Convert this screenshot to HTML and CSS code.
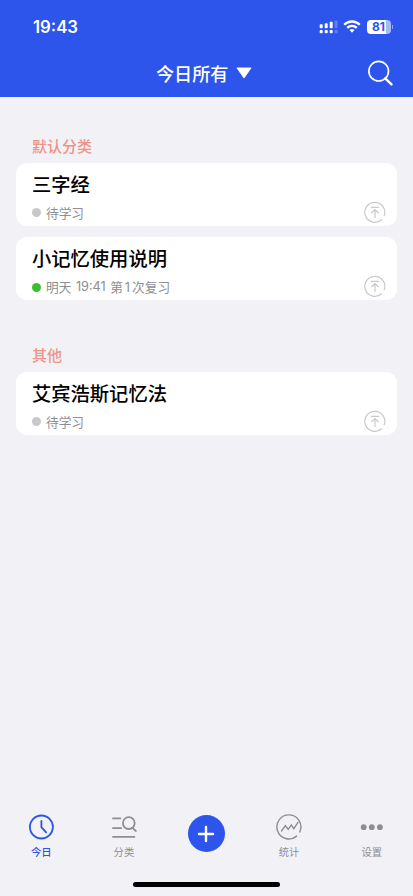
FILE: index.html
```html
<!DOCTYPE html>
<html lang="zh-CN">
<head>
  <meta charset="UTF-8">
  <meta name="viewport" content="width=device-width, initial-scale=1.0">
  <title>今日</title>
  <link rel="stylesheet" href="styles.css">
</head>
<body>

  <header class="header">
    <div class="status-bar">
      <span class="time">19:43</span>
      <div class="status-icons">
        <svg class="signal" width="19" height="14" viewBox="0 0 19 14" fill="#fff">
          <rect x="0.7" y="4.2" width="3" height="4" rx="0.8"/>
          <rect x="5.7" y="3.2" width="3" height="5" rx="0.8"/>
          <rect x="10.7" y="1.8" width="3" height="6.4" rx="0.8"/>
          <rect x="15.6" y="0.4" width="3" height="7.8" rx="0.8" opacity="0.25"/>
          <rect x="0.7" y="10" width="3" height="3.2" rx="0.8"/>
          <rect x="5.7" y="10" width="3" height="3.2" rx="0.8"/>
          <rect x="10.7" y="10" width="3" height="3.2" rx="0.8"/>
          <rect x="15.6" y="10" width="3" height="3.2" rx="0.8" opacity="0.25"/>
        </svg>
        <svg class="wifi" width="18" height="14" viewBox="0 0 18 14" fill="none" stroke="#fff" stroke-width="2.3">
          <path d="M1.2 4.7a11.1 11.1 0 0 1 15.6 0"/>
          <path d="M4.2 7.9a6.8 6.8 0 0 1 9.6 0"/>
          <path d="M6.5 10.1a3.6 3.6 0 0 1 5 0L9 12.7z" fill="#fff" stroke="none"/>
        </svg>
        <div class="battery"><span>81</span></div>
        <i class="battery-cap"></i>
      </div>
    </div>
    <div class="nav-bar">
      <div class="nav-title">今日所有
        <svg width="16" height="12" viewBox="0 0 16 12"><path d="M0.9 0.9h14.2L8 11.1z" fill="#fff" stroke="#fff" stroke-width="0.8" stroke-linejoin="round"/></svg>
      </div>
      <svg class="search" width="27" height="27" viewBox="0 0 27 27" fill="none" stroke="#fff">
        <circle cx="11.7" cy="11.2" r="9.8" stroke-width="1.7"/>
        <path d="M18.2 18.3l6.3 6" stroke-width="2.4" stroke-linecap="round"/>
      </svg>
    </div>
  </header>

  <main class="list">
    <section class="group">
      <h2>默认分类</h2>
      <div class="card">
        <h3>三字经</h3>
        <p><i class="dot"></i>待学习</p>
        <svg class="top-icon" width="22" height="22" viewBox="0 0 22 22">
          <path d="M17.8 18.5A10 10 0 1 1 20 15.3M6.8 6.4h8.4M11 17V9M7.4 12L11 8.6l3.6 3.4"/>
        </svg>
      </div>
      <div class="card">
        <h3>小记忆使用说明</h3>
        <p><i class="dot green"></i><span>明天</span> <span class="num">19:41</span> <span>第<b class="num one">1</b>次复习</span></p>
        <svg class="top-icon" width="22" height="22" viewBox="0 0 22 22">
          <path d="M17.8 18.5A10 10 0 1 1 20 15.3M6.8 6.4h8.4M11 17V9M7.4 12L11 8.6l3.6 3.4"/>
        </svg>
      </div>
    </section>

    <section class="group">
      <h2>其他</h2>
      <div class="card">
        <h3>艾宾浩斯记忆法</h3>
        <p><i class="dot"></i>待学习</p>
        <svg class="top-icon" width="22" height="22" viewBox="0 0 22 22">
          <path d="M17.8 18.5A10 10 0 1 1 20 15.3M6.8 6.4h8.4M11 17V9M7.4 12L11 8.6l3.6 3.4"/>
        </svg>
      </div>
    </section>
  </main>

  <nav class="tab-bar">
    <a class="tab active">
      <svg width="28" height="28" viewBox="0 0 28 28">
        <circle cx="14.4" cy="14" r="11.5"/>
        <path d="M14.4 8v6.2l4.7 5.2"/>
      </svg>
      <span>今日</span>
    </a>
    <a class="tab">
      <svg width="28" height="28" viewBox="0 0 28 28">
        <path d="M3 5.4h7.4M3 15.2h8.2M3 23.9h21.4M22.2 14.6l3.7 3.4"/>
        <circle cx="18.8" cy="10.1" r="5.9"/>
      </svg>
      <span>分类</span>
    </a>
    <a class="tab">
      <div class="add">
        <svg width="18" height="18" viewBox="0 0 18 18"><path d="M9 2v14M2 9h14"/></svg>
      </div>
    </a>
    <a class="tab">
      <svg width="28" height="28" viewBox="0 0 28 28">
        <path class="thin" d="M21.6 23.1A12 12 0 1 1 24.8 18.9"/>
        <path class="thin" d="M6.5 18l3.8-5.3 2.9 3.6 3.1-4.4 2.5 3.8L23 9.3"/>
      </svg>
      <span>统计</span>
    </a>
    <a class="tab">
      <svg class="more" width="28" height="28" viewBox="0 0 28 28">
        <circle cx="5.7" cy="14.2" r="2.9"/>
        <circle cx="13.8" cy="14.2" r="2.9"/>
        <circle cx="21.9" cy="14.2" r="2.9"/>
      </svg>
      <span>设置</span>
    </a>
  </nav>
  <div class="home-indicator"></div>

</body>
</html>
```

FILE: styles.css
```css
* {
  box-sizing: border-box;
}

body {
  margin: 0;
  height: 896px;
  display: flex;
  flex-direction: column;
  background-color: #f2f1f6;
  font-family: "Noto Sans CJK SC", sans-serif;
  overflow: hidden;
}

svg {
  display: block;
  flex: none;
}

h2, h3, p {
  margin: 0;
}

.header {
  height: 97px;
  background-color: #2d55eb;
  color: #fff;
}

.status-bar {
  height: 49px;
  padding: 4px 20px 0 33px;
  display: flex;
  justify-content: space-between;
  align-items: center;
}

.time {
  font-family: Inter, sans-serif;
  font-size: 16.8px;
  font-weight: 600;
}

.status-icons {
  display: flex;
  align-items: center;
}

.wifi {
  margin: 0 6px 0 5px;
}

.battery {
  width: 24px;
  height: 14px;
  padding-right: 1px;
  border-radius: 4px;
  background: linear-gradient(to right, #fff 81%, #a8b8f6 81%);
  color: #2d55eb;
  font: bold 12px/14px Inter, sans-serif;
  text-align: center;
}

.battery-cap {
  width: 1px;
  height: 4px;
  margin-left: 1px;
  background-color: #94a8f5;
}

.nav-bar {
  height: 48px;
  padding: 0 19px 0 156px;
  display: flex;
  justify-content: space-between;
  align-items: center;
}

.nav-title {
  display: flex;
  align-items: center;
  gap: 8px;
  font-size: 18.1px;
  font-weight: 500;
}

.list {
  flex: 1;
  padding: 36px 16px 0;
}

.group {
  margin-bottom: 42px;
}

.group h2 {
  height: 29.5px;
  padding-left: 16px;
  color: #ed9486;
  font-size: 15px;
  font-weight: 500;
  line-height: 26.5px;
}

.card {
  position: relative;
  height: 63.5px;
  margin-bottom: 10.5px;
  padding: 7px 16px 0;
  background-color: #fff;
  border-radius: 11px;
}

.card h3 {
  font-size: 19.3px;
  font-weight: 500;
  line-height: 29.5px;
  color: #000;
}

.card p {
  display: flex;
  align-items: center;
  margin-top: 3.5px;
  color: #8e8e93;
  font-size: 12.7px;
  line-height: 20px;
}

.card p span {
  margin-right: 4.5px;
}

.num {
  font-family: Inter, sans-serif;
  font-weight: 400;
}

.one {
  margin: 0 2px;
}

.dot {
  width: 9px;
  height: 9px;
  margin-right: 5px;
  border-radius: 50%;
  background-color: #c8c8c8;
}

.green {
  background-color: #3cbd2c;
}

/* sits over the card's bottom right corner */
.top-icon {
  position: absolute;
  right: 11px;
  bottom: 3px;
  fill: none;
  stroke: #c9c9c9;
  stroke-width: 1.2;
}

.tab-bar {
  height: 69px;
  display: grid;
  grid-template-columns: repeat(5, 1fr);
}

.tab {
  display: flex;
  flex-direction: column;
  align-items: center;
  color: #8e8e93;
  font-size: 10.3px;
  font-weight: 400;
  line-height: 16px;
}

.tab svg {
  margin-bottom: 3px;
  fill: none;
  stroke: currentColor;
  stroke-width: 1.8;
  stroke-linecap: round;
}

.tab svg .thin {
  stroke-width: 1.4;
}

.tab svg.more {
  fill: currentColor;
  stroke: none;
}

.tab.active {
  color: #2d55eb;
  font-weight: 500;
}

.add {
  width: 37px;
  height: 37px;
  margin-top: 2px;
  display: flex;
  align-items: center;
  justify-content: center;
  border-radius: 50%;
  background-color: #2d55eb;
  color: #fff;
}

.add svg {
  margin: 0;
  stroke-width: 2.4;
}

.home-indicator {
  width: 147px;
  height: 5px;
  margin: 0 auto 9px;
  border-radius: 3px;
  background-color: #000;
}
```
